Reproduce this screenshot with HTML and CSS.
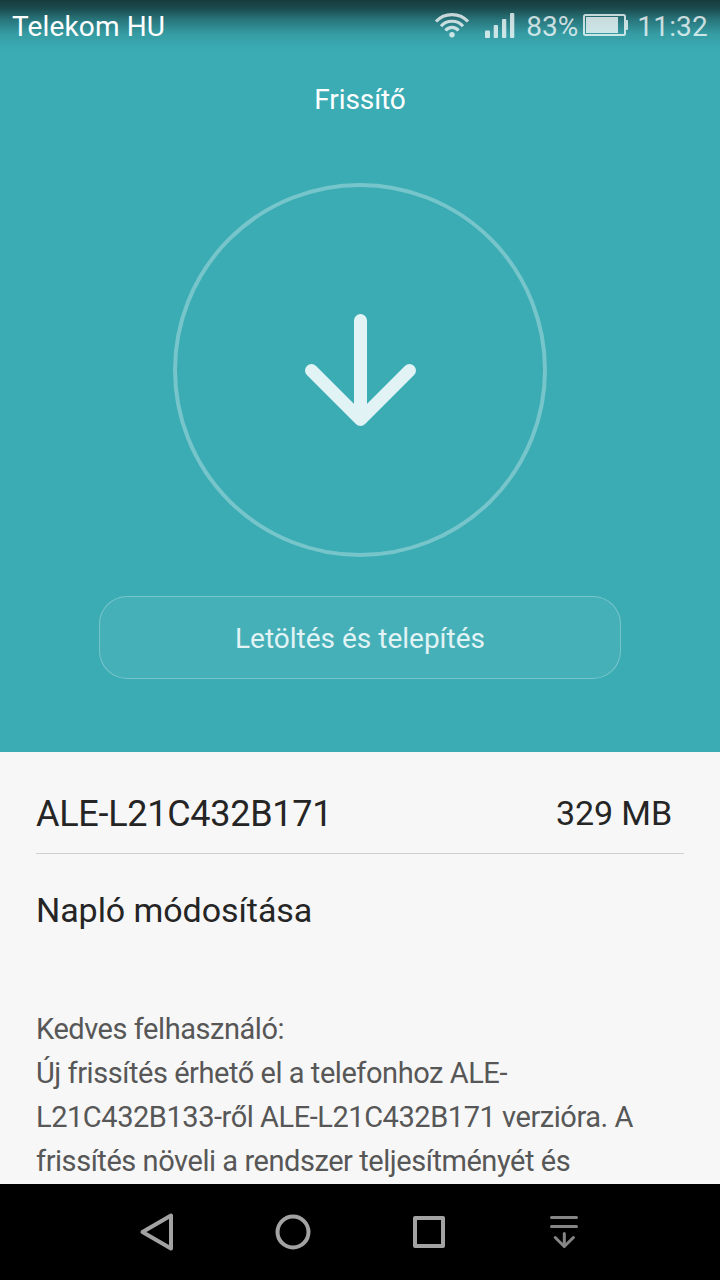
FILE: index.html
```html
<!DOCTYPE html>
<html lang="hu">
<head>
  <meta charset="utf-8">
  <title>Frissítő</title>
  <link rel="stylesheet" href="styles.css">
</head>
<body>
  <div class="screen">
    <header class="hero">
      <div class="status-bar">
        <span class="carrier">Telekom HU</span>
        <div class="status-icons">
          <svg class="wifi" width="36" height="28" viewBox="0 0 36 28" fill="none" stroke="currentColor" stroke-width="3.2" stroke-linecap="butt">
            <path d="M2 10.500C10.500 1.200 25.500 1.200 34 10.500"/>
            <path d="M7 15.200C12.800 8.600 23.200 8.600 29 15.200"/>
            <path d="M11.500 19.600C15 15.400 21 15.400 24.500 19.600"/>
            <circle cx="18" cy="23.800" r="2.700" fill="currentColor" stroke="none"/>
          </svg>
          <svg class="signal" width="30" height="26" viewBox="0 0 30 26" fill="currentColor">
            <rect x="0" y="17.500" width="5" height="7.500" rx="1"/>
            <rect x="8.700" y="12" width="4.300" height="13" rx="1"/>
            <rect x="17" y="6" width="4.300" height="19" rx="1"/>
            <rect x="25" y="0" width="4.300" height="25" rx="1"/>
          </svg>
          <span class="percent">83%</span>
          <svg class="battery" width="46" height="24" viewBox="0 0 46 24">
            <rect x="1" y="2" width="41" height="20" rx="1.500" fill="none" stroke="currentColor" stroke-width="2"/>
            <rect x="3" y="4" width="32" height="16" fill="currentColor"/>
            <path d="M43 7h1a1 1 0 0 1 1 1v8a1 1 0 0 1-1 1h-1z" fill="currentColor"/>
          </svg>
          <span class="clock">11:32</span>
        </div>
      </div>
      <h1 class="title">Frissítő</h1>
      <div class="dial">
        <svg width="112" height="114" viewBox="0 0 112 114" fill="none" stroke="currentColor" stroke-width="13" stroke-linecap="round" stroke-linejoin="round">
          <path d="M56.500 7.500v99M7.500 57.500l49 49 49-49"/>
        </svg>
      </div>
      <button class="install-btn">Letöltés és telepítés</button>
    </header>

    <main class="details">
      <div class="version-row">
        <span class="version">ALE-L21C432B171</span>
        <span class="size">329 MB</span>
      </div>
      <h2 class="log-title">Napló módosítása</h2>
      <p class="log-text">Kedves felhasználó:<br>Új frissítés érhető el a telefonhoz ALE-<br>L21C432B133-ről ALE-L21C432B171 verzióra. A<br>frissítés növeli a rendszer teljesítményét és</p>
    </main>

    <nav class="nav-bar">
      <svg width="136" height="96" viewBox="0 0 136 96" fill="none" stroke="currentColor" stroke-width="4" stroke-linejoin="round">
        <path d="M81 31.500v33L52.500 48z"/>
      </svg>
      <svg width="136" height="96" viewBox="0 0 136 96" fill="none" stroke="currentColor" stroke-width="4">
        <circle cx="67" cy="48" r="15.500"/>
      </svg>
      <svg width="136" height="96" viewBox="0 0 136 96" fill="none" stroke="currentColor" stroke-width="4" stroke-linejoin="round">
        <rect x="53" y="34" width="28" height="28"/>
      </svg>
      <svg class="hide-icon" width="136" height="96" viewBox="0 0 136 96" fill="none" stroke="currentColor" stroke-width="3" stroke-linecap="round" stroke-linejoin="round">
        <path d="M53.500 33.500h25M53.500 42.500h25M66.300 49.500v13M57.200 53.500l9.100 9 9.100-9"/>
      </svg>
    </nav>
  </div>
</body>
</html>
```
FILE: styles.css
```css
* {
  box-sizing: border-box;
}

body {
  margin: 0;
  font-family: Roboto, "Noto Sans", sans-serif;
}

.screen {
  display: flex;
  flex-direction: column;
  width: 720px;
  height: 1280px;
  overflow: hidden;
  background: #f7f7f7;
}

/* Teal top part */
.hero {
  display: flex;
  flex-direction: column;
  align-items: center;
  flex: 0 0 752px;
  background: #3bacb4;
  color: #fff;
}

.status-bar {
  display: flex;
  justify-content: space-between;
  width: 100%;
  height: 50px;
  padding: 0 12px;
  font-size: 28px;
  line-height: 53px;
  background: linear-gradient(#173b3e 0, #1b4a4d 8px, #28767c 20px, #369ca3 34px, #3bacb4 50px);
}

.carrier {
  letter-spacing: 0.15px;
}

.status-icons {
  display: flex;
  height: 50px;
  color: rgba(255, 255, 255, 0.75);
}

.wifi {
  margin: 11px 15px 0 0;
}

.signal {
  margin: 13px 11px 0 0;
}

.percent {
  width: 57px;
  white-space: nowrap;
}

.battery {
  margin: 13px 8px 0 0;
}

.clock {
  letter-spacing: 0.2px;
}

.title {
  margin: 34px 0 0;
  font-size: 28px;
  font-weight: 400;
  line-height: 32px;
  letter-spacing: -0.1px;
}

.dial {
  display: flex;
  align-items: center;
  justify-content: center;
  width: 374px;
  height: 374px;
  margin-top: 67px;
  border: 4px solid rgba(255, 255, 255, 0.3);
  border-radius: 50%;
  color: #e1f3f4;
}

.install-btn {
  width: 522px;
  height: 83px;
  margin-top: 39px;
  padding: 2px 0 0;
  border: 1px solid rgba(255, 255, 255, 0.3);
  border-radius: 28px;
  background: rgba(255, 255, 255, 0.06);
  background-clip: padding-box;
  color: #e1f3f4;
  font-family: inherit;
  font-size: 28px;
}

/* Version and change log */
.details {
  flex: 1;
  min-height: 0;
  padding: 0 36px;
  overflow: hidden;
  color: #252525;
}

.version-row {
  display: flex;
  justify-content: space-between;
  height: 102px;
  padding: 40px 12px 0 0;
  border-bottom: 1px solid #d0d0d0;
  line-height: 42px;
}

.version {
  font-size: 36px;
  line-height: 44px;
  letter-spacing: -0.28px;
}

.size {
  font-size: 34px;
  letter-spacing: -0.1px;
}

.log-title {
  margin: 36px 0 0;
  font-size: 34px;
  font-weight: 400;
  line-height: 40px;
  letter-spacing: -0.07px;
}

.log-text {
  margin: 77px 0 0;
  font-size: 29px;
  line-height: 44px;
  letter-spacing: -0.45px;
  color: #575757;
  white-space: nowrap;
}

/* Bottom navigation */
.nav-bar {
  display: flex;
  justify-content: center;
  flex: 0 0 96px;
  padding-left: 4px;
  background: #000;
  color: #a3a3a3;
}

.hide-icon {
  color: #858585;
}
```
